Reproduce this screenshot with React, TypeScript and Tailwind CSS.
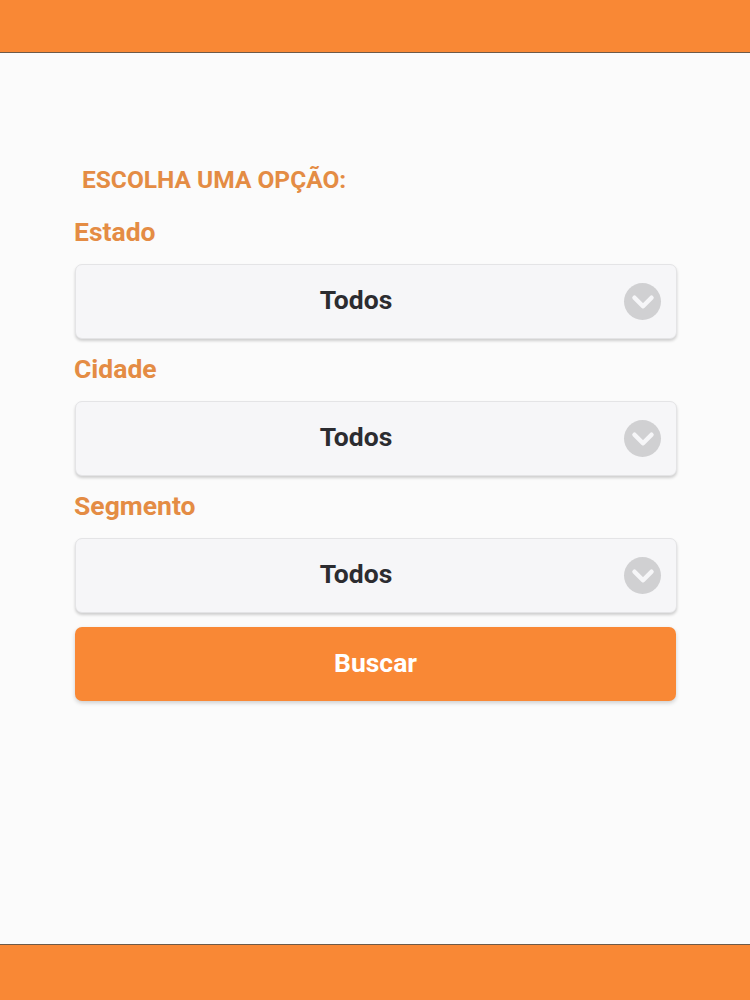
import { ChevronDown } from "lucide-react";

const fields = ["Estado", "Cidade", "Segmento"];

function SelectField({ label }: { label: string }) {
  return (
    <div>
      <label className="block h-[48px] text-[26.5px] leading-[32px] font-bold text-[#e48c44]">{label}</label>
      <div className="relative ml-[1px] flex h-[75px] items-center rounded-[7px] border border-[#e4e4e6] bg-[#f6f6f8] shadow-[0_2px_3px_rgba(0,0,0,0.18)]">
        <span className="w-[560px] pb-[3px] text-center text-[26.5px] font-bold text-[#2c2c30]">Todos</span>
        <span className="absolute right-[15px] flex h-[37px] w-[37px] items-center justify-center rounded-full bg-[#d0d0d2]">
          <ChevronDown className="h-[34px] w-[34px] text-[#f6f6f8]" strokeWidth={3.2} />
        </span>
      </div>
    </div>
  );
}

export default function App() {
  return (
    <div className="flex h-[1000px] flex-col bg-[#fbfbfb] font-['Roboto',sans-serif]">
      <header className="h-[53px] border-b border-[#6e5a48] bg-[#f98835]" />
      <main className="flex-1 pt-[110px] pr-[73px] pl-[74px]">
        <h1 className="pl-[8px] text-[24.5px] leading-[34px] font-bold text-[#e48c44]">ESCOLHA UMA OPÇÃO:</h1>
        <div className="mt-[19px] flex flex-col gap-[14px]">
          {fields.map((field) => (
            <SelectField key={field} label={field} />
          ))}
        </div>
        <button className="mt-[14px] ml-[1px] h-[74px] w-[601px] rounded-[7px] bg-[#f98835] pb-[2px] text-[26.5px] font-bold text-white shadow-[0_2px_4px_rgba(0,0,0,0.18)]">
          Buscar
        </button>
      </main>
      <footer className="h-[56px] border-t border-[#6e5a48] bg-[#f98835]" />
    </div>
  );
}
